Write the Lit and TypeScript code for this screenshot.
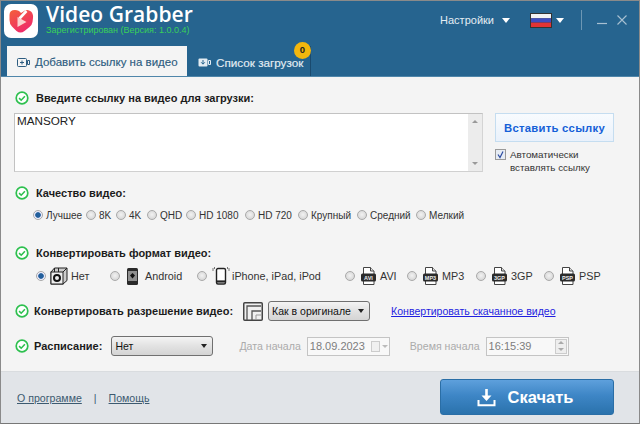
import { LitElement, html, css } from "lit";
import { customElement } from "lit/decorators.js";

const check = html`<svg class="chk" width="14" height="14" viewBox="0 0 14 14"><circle cx="7" cy="7" r="5.8" fill="#fff" stroke="#2ec04f" stroke-width="1.7"/><path d="M4.1 7.1l2.1 2.1 3.7-3.9" fill="none" stroke="#2ec04f" stroke-width="1.6"/></svg>`;

const fileIcon = (t: string) => html`<span class="fileic"><svg width="15" height="18" viewBox="0 0 15 18"><path d="M2.5.5h7l3.5 3.5v13.500h-10.500z" fill="#fff" stroke="#444"/><path d="M9.5.5v3.500h3.500" fill="#ddd" stroke="#444"/><rect x="0" y="6.500" width="15" height="8" rx="1.500" fill="#2b2b2b"/></svg><i>${t}</i></span>`;

const quality: [string, number][] = [["Лучшее", 53], ["8K", 30], ["4K", 31], ["QHD", 39], ["HD 1080", 59], ["HD 720", 53], ["Крупный", 59], ["Средний", 59], ["Мелкий", 60]];

@customElement("app-root")
export class AppRoot extends LitElement {
  static styles = css`
    :host { display: block; width: 640px; height: 424px; font-family: "Liberation Sans", Arial, sans-serif; font-size: 11px; color: #222; }
    .win { box-sizing: border-box; width: 640px; height: 424px; border: 1px solid #8a8a8a; border-bottom-color: #777; display: flex; flex-direction: column; background: #f4f4f4; }
    .head { height: 75px; background: #26648f; border-bottom: 1px solid #4f86aa; flex: none; display: flex; flex-direction: column; position: relative; }
    .top { display: flex; height: 46px; padding: 3px 0 0 3px; box-sizing: border-box; }
    .logo { width: 34px; height: 34px; flex: none; }
    .brand { margin-left: 8px; display: flex; flex-direction: column; }
    .title { font-family: "Open Sans", sans-serif; font-size: 21px; font-weight: 600; line-height: 22px; color: #fff; letter-spacing: .05px; margin-top: -1px; }
    .reg { font-size: 9px; line-height: 11px; color: #39d05a; margin-top: 0; }
    .right { margin-left: auto; display: flex; align-items: center; height: 30px; margin-top: 1px; color: #e4edf3; font-size: 11px; }
    .caret { width: 0; height: 0; border: 4.5px solid transparent; border-top: 5px solid #fff; border-bottom: 0; display: inline-block; }
    .settings { margin-right: 8px; }
    .flag { width: 22px; height: 15px; margin: 0 4px 0 20px; }
    .vsep { width: 1px; height: 20px; background: #6d97b4; margin: 0 15px 0 17px; }
    .win-btn { margin-right: 10px; display: block; }
    .win-btn.last { margin-right: 12px; }
    .tabs { display: flex; height: 30px; padding-left: 6px; margin-top: 0; }
    .tab { display: flex; align-items: center; gap: 5px; height: 30px; box-sizing: border-box; font-size: 11.5px; padding: 2px 0 0 10px; }
    .tab.on { width: 180px; background: #f4f4f4; color: #2d5c80; font-size: 11.5px; -webkit-text-stroke: .15px #2d5c80; }
    .tab.off { width: 124px; color: #e4edf3; border-right: 1px solid #1a4a6e; position: relative; padding-left: 11px; font-size: 11.7px; -webkit-text-stroke: .15px #e4edf3; }
    .badge { position: absolute; right: -1px; top: -4px; width: 17px; height: 17px; border-radius: 50%; background: #f3b70e; color: #222; font-size: 9.5px; font-weight: 700; text-align: center; line-height: 16px; -webkit-text-stroke: 0; }
    .body { flex: 1; position: relative; padding: 0 0 0 14px; border-bottom: 1px solid #d9dcdf; }
    .lab { display: flex; align-items: center; font-weight: 700; font-size: 11px; color: #1c1c1c; height: 14px; }
    .lab .chk { margin-right: 7px; }
    .url { margin-top: 8px; margin-left: -1px; display: flex; }
    .ta { width: 469px; height: 59px; box-sizing: border-box; border: 1px solid #c2c2c2; border-right-color: #d4d4d4; border-bottom-color: #d0d0d0; background: #fff; display: flex; justify-content: space-between; }
    .ta-text { padding: 0 2px; font-size: 11.7px; line-height: 14px; }
    .sb { width: 14px; background: #ececec; display: flex; flex-direction: column; justify-content: space-between; align-items: center; padding: 6px 0 6px; box-sizing: border-box; }
    .sb b { display: block; width: 0; height: 0; border: 3px solid transparent; }
    .sb .u { border-bottom: 3px solid #999; border-top: 0; }
    .sb .d { border-top: 3px solid #999; border-bottom: 0; }
    .side { margin-left: 12px; width: 119px; }
    .paste { box-sizing: border-box; width: 119px; height: 29px; border: 1px solid #c5ddf0; background: linear-gradient(#f8fbfe, #e9f1fb); color: #1460d8; font-size: 11.3px; font-weight: 700; display: flex; align-items: center; justify-content: center; letter-spacing: .25px; }
    .auto { display: flex; margin-top: 7px; font-size: 9.8px; line-height: 12.5px; color: #333; }
    .auto .cbw { width: 11px; height: 11px; flex: none; margin-right: 4px; }
    .radios { display: flex; align-items: center; height: 14px; }
    .r { width: 10px; height: 10px; border-radius: 50%; border: 1px solid #a9a9a9; box-sizing: border-box; background: radial-gradient(circle at 50% 45%, #f2f2f2, #cfcfcf); flex: none; }
    .r.on { background: radial-gradient(circle, #235f9c 0 2.4px, #eef 3.2px); }
    .q { margin-left: 18px; margin-top: 8px; }
    .q .o { display: flex; align-items: center; gap: 3px; font-size: 10px; color: #333; white-space: nowrap; flex: none; }
    .f { margin-left: 21px; margin-top: 7px; height: 18px; position: relative; }
    .fo { position: absolute; top: 0; height: 18px; display: flex; align-items: center; font-size: 10.8px; color: #333; white-space: nowrap; }
    .fo .r { margin-right: 6px; }
    .fo svg { flex: none; }
    .ic-none { margin: 0 3px 0 -2px; }
    .ic-android { margin: 0 7px 0 1px; }
    .ic-iphone { margin: 0 2px 0 -1px; }
    .fileic { position: relative; width: 15px; height: 18px; display: inline-block; margin-right: 4px; }
    .fileic svg { display: block; }
    .fileic i { position: absolute; left: 0; width: 15px; top: 6.5px; font: normal 700 5.5px/8px "Liberation Sans", sans-serif; color: #eee; text-align: center; }
    .sel { box-sizing: border-box; height: 20px; width: 102px; border: 1px solid #707070; border-radius: 3px; background: linear-gradient(#f4f4f4, #e2e2e2 50%, #d4d4d4); display: flex; align-items: center; justify-content: space-between; padding: 0 5px 0 3px; color: #111; font-size: 10.5px; flex: none; }
    .tri { width: 0; height: 0; border: 3.5px solid transparent; border-top: 4px solid #222; border-bottom: 0; }
    .row { display: flex; align-items: center; height: 20px; }
    .lab .nudge { margin-left: -2px; }
    .res-ic { margin: 0 5px 0 10px; flex: none; }
    .link { color: #1f1fe0; text-decoration: underline; font-size: 10.55px; margin-left: 21px; }
    .dim { color: #ababab; font-size: 10.6px; }
    .dim.d1 { margin-left: 26px; }
    .dim.d2 { margin-left: 20px; }
    .sel.s2 { margin-left: 9px; }
    .inp { box-sizing: border-box; height: 19px; width: 83px; margin-left: 6px; border: 1px solid #c4c4c4; background: #f8f8f8; color: #7d7d7d; font-size: 11px; display: flex; align-items: center; padding: 0 1px 0 2px; justify-content: space-between; flex: none; }
    .spin { display: flex; flex-direction: column; width: 12px; height: 15px; border: 1px solid #ccc; box-sizing: border-box; align-items: center; justify-content: space-around; background: #eee; }
    .foot { height: 51px; flex: none; background: #e1e4e8; display: flex; align-items: center; padding-left: 16px; position: relative; }
    .foot a { color: #3c5a70; font-size: 10.6px; text-decoration: underline; }
    .bar { margin: 0 12px; color: #3c5a70; font-size: 10.5px; }
    .dl { position: absolute; right: 25px; top: 7px; width: 174px; height: 36px; box-sizing: border-box; border: 1px solid #2a6ea6; border-radius: 3px; background: linear-gradient(#5ea0dc, #3e86c6 45%, #2a72ac); display: flex; align-items: center; justify-content: center; gap: 12px; padding-right: 4px; color: #fff; font-size: 16.5px; font-weight: 700; }
    .mt14 { margin-top: 14px; }
    .mt12 { margin-top: 12px; }
    .mt24 { margin-top: 24px; }
    .mt16 { margin-top: 16px; }
    .mt15 { margin-top: 15px; }
    .p0 { left: 0; } .p1 { left: 74px; } .p2 { left: 161px; } .p3 { left: 309px; } .p4 { left: 371px; } .p5 { left: 440px; } .p6 { left: 508px; }
  `;

  render() {
    return html`<div class="win">
      <div class="head">
        <div class="top">
          <svg class="logo" viewBox="0 0 34 34"><rect width="34" height="34" rx="7" fill="#fff"/>
            <defs><linearGradient id="lg" x1="0" y1="0" x2=".6" y2="1"><stop offset="0" stop-color="#f4603a"/><stop offset="1" stop-color="#ee2a6b"/></linearGradient></defs>
            <path d="M16.500 28.500 Q14.500 28.500 12.500 27 L8 22.500 Q5.500 20 5.500 16 L5.500 11 Q5.500 6 11 6 Q15 6 17 9 L21 6.500 Q24 5 27 7.500 Q29.500 10 29 14 L28.500 18 Q28 21 25.500 23 L20.500 27 Q18.500 28.500 16.500 28.500 Z" fill="url(#lg)"/>
            <path d="M15.500 14.500 L22.500 7" stroke="#fff" stroke-width="2.600" fill="none"/>
            <path d="M13.500 13 L22.500 18 L13.500 23 Z" fill="#fbd2cf"/></svg>
          <div class="brand"><div class="title">Video Grabber</div><div class="reg">Зарегистрирован (Версия: 1.0.0.4)</div></div>
          <div class="right">
            <span class="settings">Настройки</span><span class="caret"></span>
            <svg class="flag" viewBox="0 0 22 15"><rect width="22" height="15" fill="#333"/><rect x="1" y="1" width="20" height="4.300" fill="#f2f2f2"/><rect x="1" y="5.300" width="20" height="4.300" fill="#3e4cc0"/><rect x="1" y="9.600" width="20" height="4.400" fill="#e23434"/></svg>
            <span class="caret"></span>
            <span class="vsep"></span>
            <svg class="win-btn" width="10" height="10" viewBox="0 0 10 10"><path d="M0 8.500h10" stroke="#a8c0d2" stroke-width="1.200"/></svg>
            <svg class="win-btn last" width="10" height="10" viewBox="0 0 10 10"><path d="M.5.5l9 9M9.500.5l-9 9" stroke="#a8c0d2" stroke-width="1.100"/></svg>
          </div>
        </div>
        <div class="tabs">
          <div class="tab on"><svg width="13" height="11" viewBox="0 0 13 11"><rect x=".5" y="1.500" width="9" height="8" rx="1" fill="none" stroke="#2d5c80"/><path d="M3 5.500h4M5 3.500v4" stroke="#2d5c80"/><path d="M10.500 3.500h2v4h-2z" fill="none" stroke="#2d5c80"/></svg>Добавить ссылку на видео</div>
          <div class="tab off"><svg width="13" height="11" viewBox="0 0 13 11"><rect x=".5" y="1.500" width="9" height="8" rx="1" fill="#e4edf3"/><path d="M5 3v4M3.200 5.300L5 7.200l1.800-1.900" fill="none" stroke="#26648f"/><path d="M10.500 3.500h2v4h-2z" fill="none" stroke="#e4edf3"/></svg>Список загрузок<span class="badge">0</span></div>
        </div>
      </div>
      <div class="body">
        <div class="lab mt14">${check}Введите ссылку на видео для загрузки:</div>
        <div class="url">
          <div class="ta"><div class="ta-text">MANSORY</div><div class="sb"><b class="u"></b><b class="d"></b></div></div>
          <div class="side">
            <div class="paste">Вставить ссылку</div>
            <div class="auto"><svg class="cbw" viewBox="0 0 11 11"><rect x=".5" y=".5" width="10" height="10" fill="#e6ecf4" stroke="#9a9a9a"/><path d="M3 5.500l2 3 3-6" fill="none" stroke="#2b4aa0" stroke-width="1.200"/></svg><span>Автоматически<br>вставлять ссылку</span></div>
          </div>
        </div>
        <div class="lab mt12">${check}Качество видео:</div>
        <div class="radios q">${quality.map(([t, w], i) => html`<span class="o" style="width:${w}px"><span class="r ${i === 0 ? "on" : ""}"></span>${t}</span>`)}</div>
        <div class="lab mt24">${check}Конвертировать формат видео:</div>
        <div class="f">
          <span class="fo p0"><span class="r on"></span><svg class="ic-none" width="18" height="18" viewBox="0 0 18 18"><path d="M1 5l3.500-4h12.500v12.500l-4 3.500H1z" fill="#ccc" stroke="#222"/><path d="M4.500 1v4M8.500 1v4M13 5l4-4" stroke="#222" fill="none"/><rect x="1" y="5" width="12" height="12" fill="#eee" stroke="#222"/><circle cx="7" cy="11" r="3" fill="none" stroke="#111" stroke-width="2"/></svg>Нет</span>
          <span class="fo p1"><span class="r"></span><svg class="ic-android" width="11" height="17" viewBox="0 0 11 17"><rect width="11" height="17" rx="1.500" fill="#2a2a2a"/><rect x="1" y="3" width="9" height="10" fill="#8f8f8f"/><path d="M5.500 5l2.500 2.500-2.500 3-2.500-3z" fill="#111"/></svg>Android</span>
          <span class="fo p2"><span class="r"></span><svg class="ic-iphone" width="18" height="18" viewBox="0 0 18 18"><rect x="4.500" y="1.500" width="9" height="15.500" rx="1.500" fill="#fff" stroke="#222" stroke-width="1.400"/><path d="M4.500 14.500h9" stroke="#222" stroke-width="2.200"/><path d="M1 1v3M2.500 0v2M17 1v3M15.500 0v2" stroke="#777"/></svg>iPhone, iPad, iPod</span>
          <span class="fo p3"><span class="r"></span>${fileIcon("AVI")}AVI</span>
          <span class="fo p4"><span class="r"></span>${fileIcon("MP3")}MP3</span>
          <span class="fo p5"><span class="r"></span>${fileIcon("3GP")}3GP</span>
          <span class="fo p6"><span class="r"></span>${fileIcon("PSP")}PSP</span>
        </div>
        <div class="row mt16">
          <div class="lab">${check}<span class="nudge">Конвертировать разрешение видео:</span></div>
          <svg class="res-ic" width="20" height="19" viewBox="0 0 20 19"><rect x=".75" y=".75" width="18.500" height="17.500" fill="#f0f0f0" stroke="#444" stroke-width="1.500" rx="1"/><path d="M4 18V4h14" fill="none" stroke="#555" stroke-width="1.300"/><path d="M9 18V9h9" fill="none" stroke="#555" stroke-width="1.300"/><path d="M13 18v-5h5" fill="none" stroke="#999"/></svg>
          <div class="sel">Как в оригинале<span class="tri"></span></div>
          <a class="link">Конвертировать скачанное видео</a>
        </div>
        <div class="row mt15">
          <div class="lab">${check}<span class="nudge">Расписание:</span></div>
          <div class="sel s2">Нет<span class="tri"></span></div>
          <span class="dim d1">Дата начала</span>
          <div class="inp">18.09.2023<svg width="17" height="11" viewBox="0 0 17 11"><rect x=".5" y=".5" width="8" height="10" fill="#f0f0f0" stroke="#ccc"/><path d="M11 4l3 3 3-3z" fill="#bbb"/></svg></div>
          <span class="dim d2">Время начала</span>
          <div class="inp">16:15:39<span class="spin"><svg width="6" height="3"><path d="M0 3l3-3 3 3z" fill="#aaa"/></svg><svg width="6" height="3"><path d="M0 0l3 3 3-3z" fill="#aaa"/></svg></span></div>
        </div>
      </div>
      <div class="foot">
        <a>О программе</a><span class="bar">|</span><a>Помощь</a>
        <div class="dl"><svg width="19" height="19" viewBox="0 0 19 19"><path d="M8.200 1h2.600v6.500h3.700l-5 5.500-5-5.500h3.700z" fill="#fff"/><path d="M1.500 12v5.200h16V12" fill="none" stroke="#fff" stroke-width="2"/></svg>Скачать</div>
      </div>
    </div>`;
  }
}
